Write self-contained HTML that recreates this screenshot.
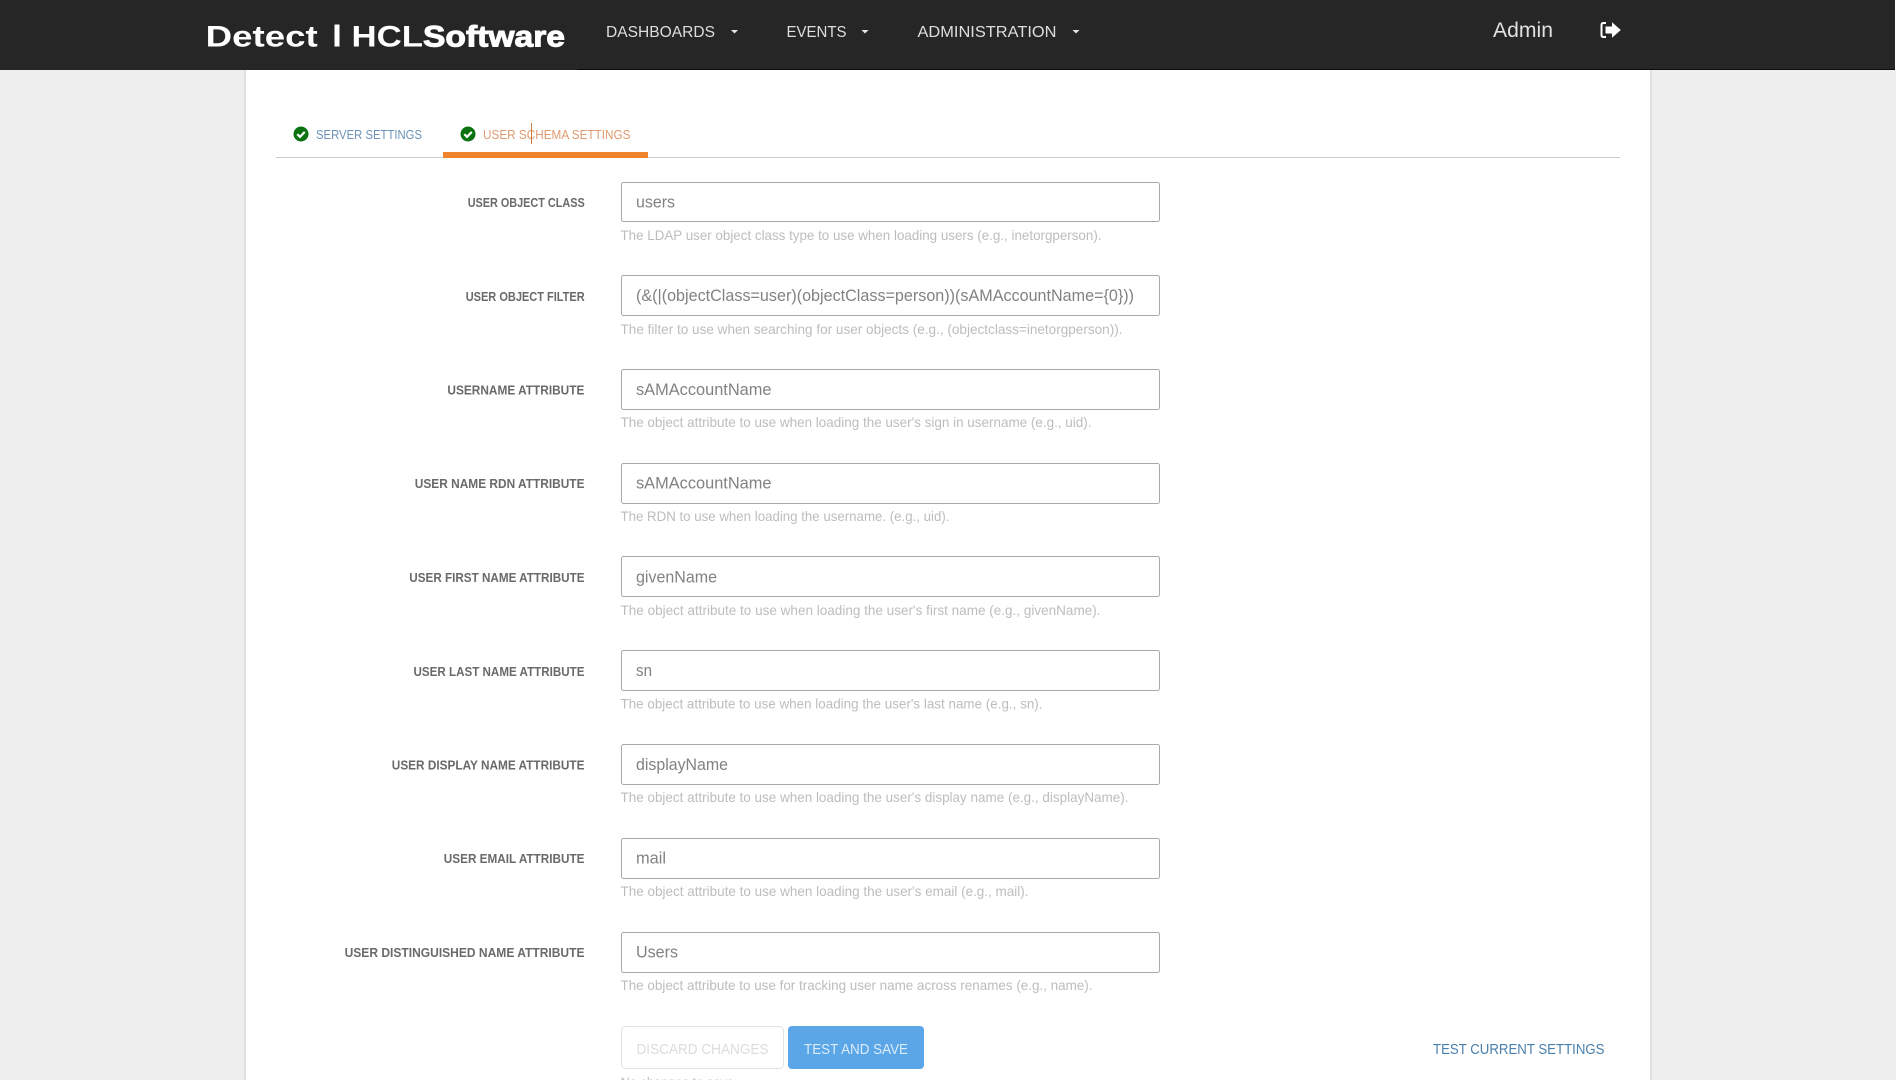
<!DOCTYPE html>
<html lang="en">
<head>
<meta charset="utf-8">
<title>Detect | HCLSoftware - User Schema Settings</title>
<style>
html,body{margin:0;padding:0;width:1896px;height:1080px;overflow:hidden;background:#eeeeee}
svg{display:block;position:absolute;left:0;top:0}
text{font-family:"Liberation Sans",sans-serif;white-space:pre}
.nav{font-size:16px;fill:#dedede}
.lab{font-size:12.5px;font-weight:700;fill:#6a6a6a}
.val{font-size:17px;fill:#828282}
.help{font-size:14px;fill:#bdbdbd}
.box{fill:#fff;stroke:#a9a9a9;stroke-width:1}
</style>
</head>
<body>
<svg width="1896" height="1080" viewBox="0 0 1896 1080" xmlns="http://www.w3.org/2000/svg">
  <!-- panel -->
  <rect x="244" y="69" width="1408" height="1011" fill="#dfdfdf"/>
  <rect x="246" y="69" width="1404" height="1011" fill="#fff"/>

  <!-- header -->
  <rect x="0" y="0" width="1895" height="70" fill="#262626"/>
  <rect x="577" y="69" width="1318" height="1" fill="#0c0c0c"/>
  <rect x="1895" y="0" width="1" height="70" fill="#ffffff"/>

  <text x="205.700" y="46.300" font-size="30" font-weight="700" fill="#fff" textLength="112" lengthAdjust="spacingAndGlyphs">Detect</text>
  <rect x="334.500" y="24.500" width="5" height="22" fill="#fff"/>
  <text x="351.500" y="46.300" font-size="30" font-weight="700" fill="#fff" textLength="71.500" lengthAdjust="spacingAndGlyphs">HCL</text>
  <text x="423" y="46.300" font-size="30" font-weight="700" fill="#fff" stroke="#fff" stroke-width="1" textLength="142" lengthAdjust="spacingAndGlyphs">Software</text>

  <text class="nav" x="606" y="37" textLength="109" lengthAdjust="spacingAndGlyphs">DASHBOARDS</text>
  <path d="M731 30h7l-3.500 3.500z" fill="#e6e6e6"/>
  <text class="nav" x="786.500" y="37" textLength="60" lengthAdjust="spacingAndGlyphs">EVENTS</text>
  <path d="M861.500 30h7l-3.500 3.500z" fill="#e6e6e6"/>
  <text class="nav" x="917.500" y="37" textLength="139" lengthAdjust="spacingAndGlyphs">ADMINISTRATION</text>
  <path d="M1072.500 30h7l-3.500 3.500z" fill="#e6e6e6"/>

  <text x="1493" y="37" font-size="21" fill="#e0e0e0" textLength="60" lengthAdjust="spacingAndGlyphs">Admin</text>
  <path d="M1606 23h-2.500q-2 0 -2 2v10q0 2 2 2h2.500" fill="none" stroke="#fff" stroke-width="2"/>
  <path d="M1605.500 26.500h6.500v-4.200l8.800 7.700 -8.800 7.700v-4.200h-6.500z" fill="#fff"/>

  <!-- tabs -->
  <rect x="276" y="157" width="1344" height="1" fill="#cccccc"/>
  <rect x="443" y="152" width="205" height="6" fill="#f0842c"/>
  <circle cx="301" cy="134" r="7.500" fill="#0a720f"/>
  <path d="M297.300 134.200l2.700 2.700 4.800-5" fill="none" stroke="#fff" stroke-width="2.200"/>
  <text x="316" y="139" font-size="13" fill="#6a92b8" textLength="106" lengthAdjust="spacingAndGlyphs">SERVER SETTINGS</text>
  <circle cx="468" cy="134" r="7.500" fill="#0a720f"/>
  <path d="M464.300 134.200l2.700 2.700 4.800-5" fill="none" stroke="#fff" stroke-width="2.200"/>
  <text x="483" y="139" font-size="13" fill="#e09a70" textLength="147.500" lengthAdjust="spacingAndGlyphs">USER SCHEMA SETTINGS</text>
  <rect x="531" y="123" width="1" height="21" fill="#c9773f"/>

  <!-- row 1 -->
  <text class="lab" x="467.700" y="207" textLength="117" lengthAdjust="spacingAndGlyphs">USER OBJECT CLASS</text>
  <rect class="box" x="621.500" y="182.500" width="538" height="39" rx="2"/>
  <text class="val" x="636" y="207.300" textLength="39" lengthAdjust="spacingAndGlyphs">users</text>
  <text class="help" x="620.500" y="240" textLength="481" lengthAdjust="spacingAndGlyphs">The LDAP user object class type to use when loading users (e.g., inetorgperson).</text>

  <!-- row 2 -->
  <text class="lab" x="465.700" y="301" textLength="119" lengthAdjust="spacingAndGlyphs">USER OBJECT FILTER</text>
  <rect class="box" x="621.500" y="275.500" width="538" height="40" rx="2"/>
  <text class="val" x="636" y="301" textLength="498" lengthAdjust="spacingAndGlyphs">(&amp;(|(objectClass=user)(objectClass=person))(sAMAccountName={0}))</text>
  <text class="help" x="620.500" y="334" textLength="502" lengthAdjust="spacingAndGlyphs">The filter to use when searching for user objects (e.g., (objectclass=inetorgperson)).</text>

  <!-- row 3 -->
  <text class="lab" x="447.400" y="394.500" textLength="137" lengthAdjust="spacingAndGlyphs">USERNAME ATTRIBUTE</text>
  <rect class="box" x="621.500" y="369.500" width="538" height="40" rx="2"/>
  <text class="val" x="636" y="395" textLength="135.500" lengthAdjust="spacingAndGlyphs">sAMAccountName</text>
  <text class="help" x="620.500" y="427" textLength="471" lengthAdjust="spacingAndGlyphs">The object attribute to use when loading the user's sign in username (e.g., uid).</text>

  <!-- row 4 -->
  <text class="lab" x="414.800" y="488" textLength="169.700" lengthAdjust="spacingAndGlyphs">USER NAME RDN ATTRIBUTE</text>
  <rect class="box" x="621.500" y="463.500" width="538" height="40" rx="2"/>
  <text class="val" x="636" y="488.500" textLength="135.500" lengthAdjust="spacingAndGlyphs">sAMAccountName</text>
  <text class="help" x="620.500" y="521" textLength="329" lengthAdjust="spacingAndGlyphs">The RDN to use when loading the username. (e.g., uid).</text>

  <!-- row 5 -->
  <text class="lab" x="409.300" y="582" textLength="175.200" lengthAdjust="spacingAndGlyphs">USER FIRST NAME ATTRIBUTE</text>
  <rect class="box" x="621.500" y="556.500" width="538" height="40" rx="2"/>
  <text class="val" x="636" y="582.300" textLength="81" lengthAdjust="spacingAndGlyphs">givenName</text>
  <text class="help" x="620.500" y="615" textLength="480" lengthAdjust="spacingAndGlyphs">The object attribute to use when loading the user's first name (e.g., givenName).</text>

  <!-- row 6 -->
  <text class="lab" x="413.500" y="676" textLength="171" lengthAdjust="spacingAndGlyphs">USER LAST NAME ATTRIBUTE</text>
  <rect class="box" x="621.500" y="650.500" width="538" height="40" rx="2"/>
  <text class="val" x="636" y="676" textLength="16" lengthAdjust="spacingAndGlyphs">sn</text>
  <text class="help" x="620.500" y="708.500" textLength="422" lengthAdjust="spacingAndGlyphs">The object attribute to use when loading the user's last name (e.g., sn).</text>

  <!-- row 7 -->
  <text class="lab" x="391.800" y="769.500" textLength="192.700" lengthAdjust="spacingAndGlyphs">USER DISPLAY NAME ATTRIBUTE</text>
  <rect class="box" x="621.500" y="744.500" width="538" height="40" rx="2"/>
  <text class="val" x="636" y="770" textLength="92" lengthAdjust="spacingAndGlyphs">displayName</text>
  <text class="help" x="620.500" y="802" textLength="508" lengthAdjust="spacingAndGlyphs">The object attribute to use when loading the user's display name (e.g., displayName).</text>

  <!-- row 8 -->
  <text class="lab" x="443.800" y="863.200" textLength="140.700" lengthAdjust="spacingAndGlyphs">USER EMAIL ATTRIBUTE</text>
  <rect class="box" x="621.500" y="838.500" width="538" height="40" rx="2"/>
  <text class="val" x="636" y="863.500" textLength="30" lengthAdjust="spacingAndGlyphs">mail</text>
  <text class="help" x="620.500" y="896" textLength="408" lengthAdjust="spacingAndGlyphs">The object attribute to use when loading the user's email (e.g., mail).</text>

  <!-- row 9 -->
  <text class="lab" x="344.600" y="957" textLength="239.900" lengthAdjust="spacingAndGlyphs">USER DISTINGUISHED NAME ATTRIBUTE</text>
  <rect class="box" x="621.500" y="932.500" width="538" height="40" rx="2"/>
  <text class="val" x="636" y="957.300" textLength="42" lengthAdjust="spacingAndGlyphs">Users</text>
  <text class="help" x="620.500" y="990" textLength="472" lengthAdjust="spacingAndGlyphs">The object attribute to use for tracking user name across renames (e.g., name).</text>

  <!-- buttons -->
  <rect x="621.500" y="1026.500" width="162" height="42" rx="4" fill="#fff" stroke="#e2e2e2"/>
  <text x="636.500" y="1054" font-size="14.500" fill="#dcdcdc" textLength="132" lengthAdjust="spacingAndGlyphs">DISCARD CHANGES</text>
  <rect x="788" y="1026" width="136" height="43" rx="4" fill="#5aa6e6"/>
  <text x="804" y="1054" font-size="14.500" fill="#dcecfa" textLength="104" lengthAdjust="spacingAndGlyphs">TEST AND SAVE</text>
  <text x="1433" y="1054" font-size="14.500" fill="#4a80ad" textLength="171.500" lengthAdjust="spacingAndGlyphs">TEST CURRENT SETTINGS</text>
  <text class="help" x="620.500" y="1087" textLength="117" lengthAdjust="spacingAndGlyphs">No changes to save.</text>
</svg>
</body>
</html>
